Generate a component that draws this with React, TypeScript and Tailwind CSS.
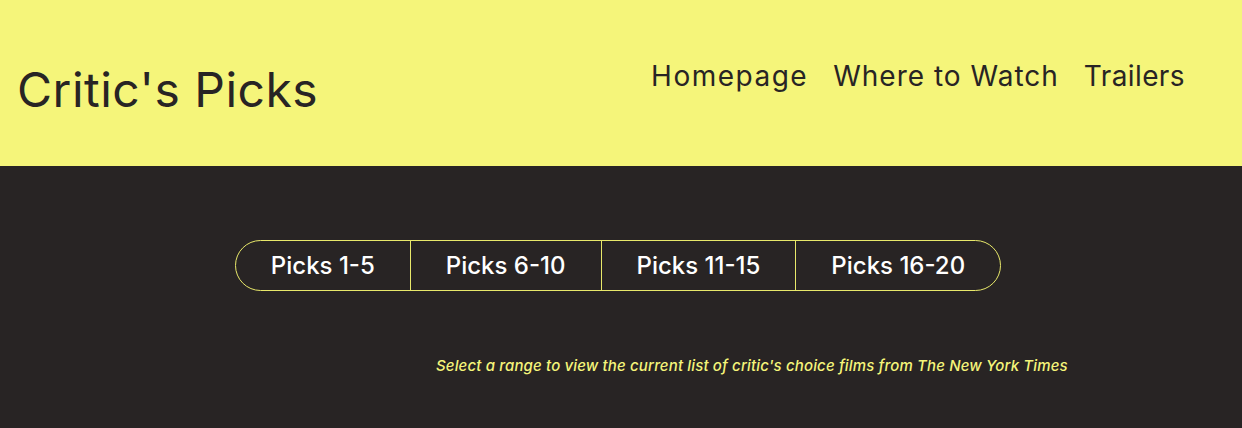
import React from "react";

const ranges = ["Picks 1-5", "Picks 6-10", "Picks 11-15", "Picks 16-20"];

export default function App() {
  return (
    <div className="w-[1242px] h-[428px] bg-[#282424] font-['Inter',sans-serif] overflow-hidden">
      <header className="h-[166px] bg-[#f5f57a] flex items-start justify-between">
        <h1 className="mt-[62px] ml-[17px] text-[48px] leading-[56px] text-[#282424] tracking-[0.5px]">
          Critic's Picks
        </h1>
        <nav className="mt-[58px] mr-[57px] flex gap-[25px] text-[28px] leading-[36px] text-[#282424] tracking-[1px]">
          <span className="tracking-[1.5px]">Homepage</span>
          <span>Where to Watch</span>
          <span className="tracking-[0.4px]">Trailers</span>
        </nav>
      </header>

      <div className="flex justify-center pt-[74px] pr-[6px]">
        <div className="flex h-[51px] rounded-full border border-[#e8e86a] overflow-hidden">
          {ranges.map((r, idx) => (
            <button
              key={idx}
              className={`px-[35px] text-[24px] font-medium text-white ${
                idx > 0 ? "border-l border-[#e8e86a]" : ""
              }`}
            >
              {r}
            </button>
          ))}
        </div>
      </div>

      <p className="mt-[64px] ml-[436px] text-[15px] tracking-[0.15px] italic font-medium text-[#f5f57a]">
        Select a range to view the current list of critic's choice films from The New York Times
      </p>
    </div>
  );
}
